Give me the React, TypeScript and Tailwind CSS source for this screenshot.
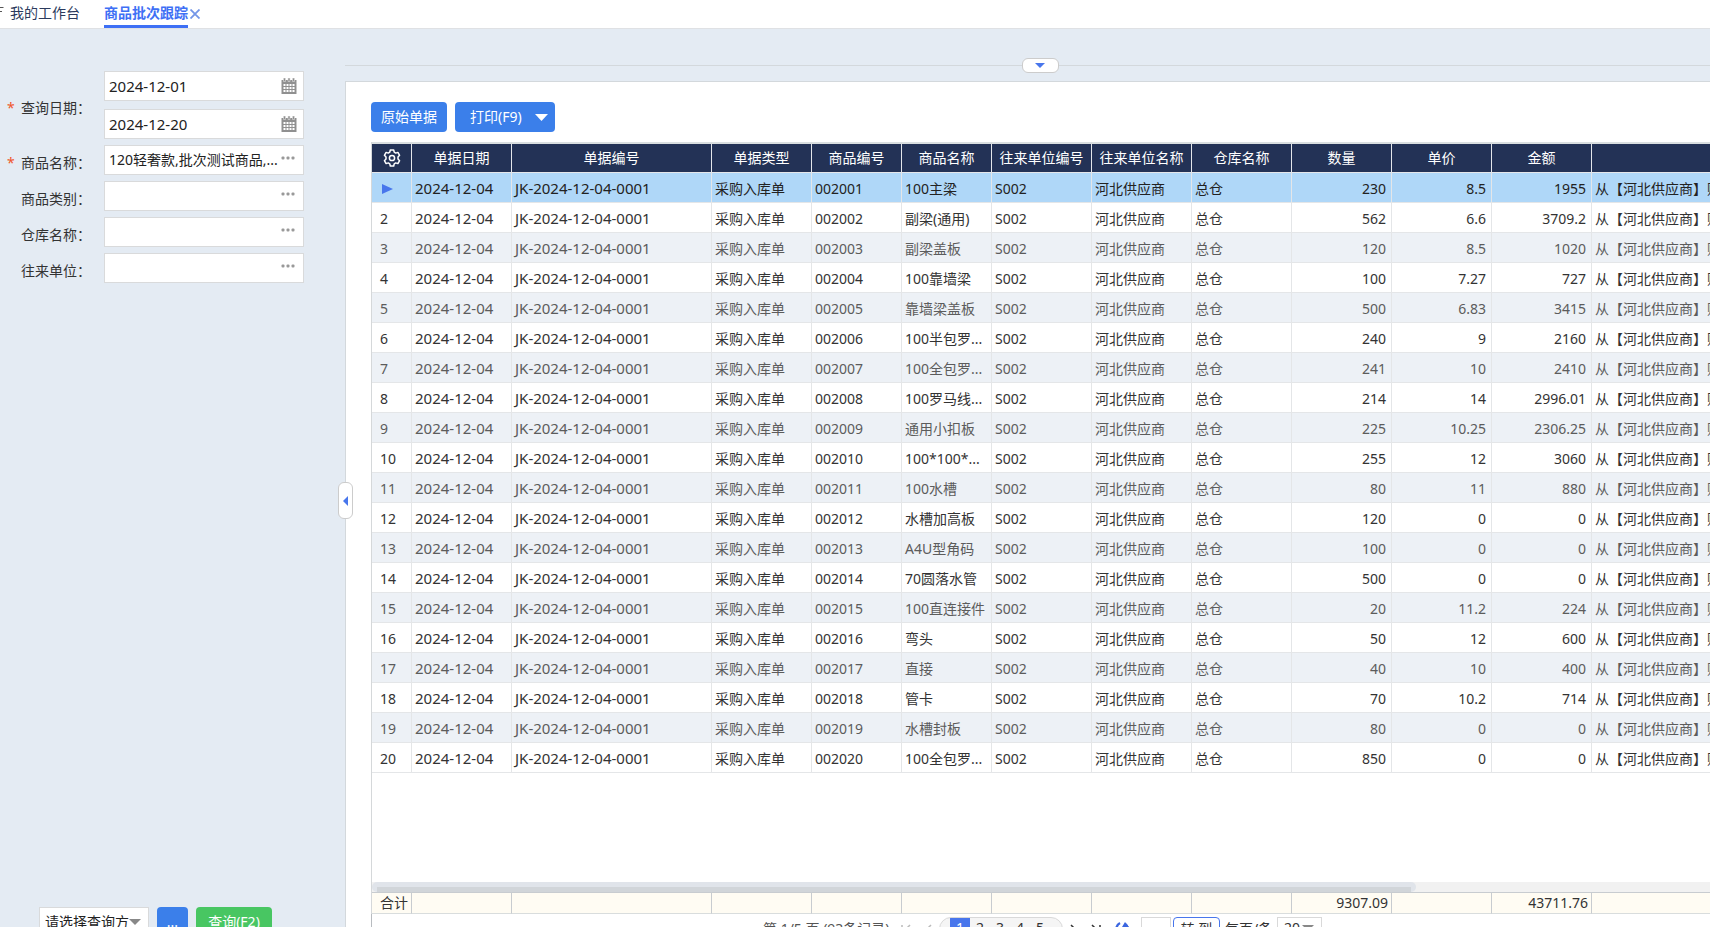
import type { ReactNode } from "react";

const columns = [
  { title: "单据日期", width: "w-[100px]" },
  { title: "单据编号", width: "w-[200px]" },
  { title: "单据类型", width: "w-[100px]" },
  { title: "商品编号", width: "w-[90px]" },
  { title: "商品名称", width: "w-[90px]" },
  { title: "往来单位编号", width: "w-[100px]" },
  { title: "往来单位名称", width: "w-[100px]" },
  { title: "仓库名称", width: "w-[100px]" },
  { title: "数量", width: "w-[100px]" },
  { title: "单价", width: "w-[100px]" },
  { title: "金额", width: "w-[100px]" },
  { title: "摘要", width: "w-[300px]" },
];

const items: [string, string, string, string][] = [
  ["100主梁", "230", "8.5", "1955"],
  ["副梁(通用)", "562", "6.6", "3709.2"],
  ["副梁盖板", "120", "8.5", "1020"],
  ["100靠墙梁", "100", "7.27", "727"],
  ["靠墙梁盖板", "500", "6.83", "3415"],
  ["100半包罗...", "240", "9", "2160"],
  ["100全包罗...", "241", "10", "2410"],
  ["100罗马线...", "214", "14", "2996.01"],
  ["通用小扣板", "225", "10.25", "2306.25"],
  ["100*100*...", "255", "12", "3060"],
  ["100水槽", "80", "11", "880"],
  ["水槽加高板", "120", "0", "0"],
  ["A4U型角码", "100", "0", "0"],
  ["70圆落水管", "500", "0", "0"],
  ["100直连接件", "20", "11.2", "224"],
  ["弯头", "50", "12", "600"],
  ["直接", "40", "10", "400"],
  ["管卡", "70", "10.2", "714"],
  ["水槽封板", "80", "0", "0"],
  ["100全包罗...", "850", "0", "0"],
];

function rowTone(index: number) {
  if (index === 0) return "bg-[#afd7f8] text-[#222222]";
  return index % 2 === 1 ? "bg-white text-[#333333]" : "bg-[#edf1f6] text-[#5c5c5c]";
}

function cellStyle(column: number) {
  if (column < 2) return "text-[15px] pl-[3px] pr-0";
  if (column >= 8 && column <= 10) return "pl-1 pr-[5px] text-right";
  return "pl-[3px] pr-0";
}

function ColumnWidths() {
  return (
    <colgroup>
      <col className="w-10" />
      {columns.map((c) => (
        <col key={c.title} className={c.width} />
      ))}
    </colgroup>
  );
}

function CalendarIcon() {
  return (
    <svg width="16" height="16" viewBox="0 0 16 16" aria-hidden="true">
      <path d="M0.5 2h15v14H0.5z" fill="#909090" />
      <path d="M2.5 0h2v3.5h-2zM7 0h2v3.5H7zM11.500 0h2v3.500h-2z" fill="#909090" stroke="#e0e0e0" strokeWidth="0.6" />
      <path
        d="M2.500 6h2v2h-2zM5.500 6h2v2h-2zM8.500 6h2v2h-2zM11.500 6h2v2h-2zM2.500 9h2v2h-2zM5.500 9h2v2h-2zM8.500 9h2v2h-2zM11.500 9h2v2h-2zM2.500 12h2v2h-2zM5.500 12h2v2h-2zM8.500 12h2v2h-2zM11.500 12h2v2h-2z"
        fill="#ffffff"
      />
    </svg>
  );
}

function DotsIcon() {
  return (
    <svg width="14" height="4" viewBox="0 0 14 4" aria-hidden="true" fill="#999999">
      <rect x="0.500" y="0.500" width="3" height="3" rx="1" />
      <rect x="5.500" y="0.500" width="3" height="3" rx="1" />
      <rect x="10.500" y="0.500" width="3" height="3" rx="1" />
    </svg>
  );
}

function GearIcon() {
  return (
    <svg width="18" height="18" viewBox="0 0 18 18" fill="none" stroke="#ffffff" strokeWidth="1.500" strokeLinejoin="round" aria-hidden="true">
      <path d="M7.300 1h3.400l.5 2.200 1.500.9 2.200-.7 1.700 2.900-1.600 1.700v2l1.600 1.700-1.700 2.900-2.200-.7-1.500.9-.5 2.200H7.300l-.5-2.200-1.500-.9-2.200.7-1.700-2.900L3 10V8L1.400 6.300l1.700-2.900 2.200.7 1.500-.9z" />
      <circle cx="9" cy="9" r="2.600" />
    </svg>
  );
}

function Field({ id, label, value = "", kind = "dots" }: { id: string; label: string; value?: string; kind?: "dots" | "date" }) {
  return (
    <div className="flex h-[30px] w-full min-w-0 items-center border border-[#d9dadb] bg-white pl-1 pr-1.5">
      <input
        id={id}
        aria-label={label}
        defaultValue={value}
        className={
          kind === "date"
            ? "w-0 min-w-0 flex-1 bg-transparent text-[15px] text-[#222222] outline-none"
            : "w-0 min-w-0 flex-1 bg-transparent text-sm text-[#222222] outline-none"
        }
      />
      <button type="button" aria-label={`选择${label}`} className={kind === "date" ? "shrink-0" : "shrink-0 pl-0.5 pr-0.5 pb-1"}>
        {kind === "date" ? <CalendarIcon /> : <DotsIcon />}
      </button>
    </div>
  );
}

function Label({ htmlFor, required, children }: { htmlFor: string; required?: boolean; children: ReactNode }) {
  return (
    <label htmlFor={htmlFor} className="flex w-[104px] shrink-0 items-center pt-1.5 text-sm text-[#333333]">
      <span className="w-[21px] shrink-0 pl-[7px] text-[#f0562a]">{required ? "*" : ""}</span>
      <span>{children}：</span>
    </label>
  );
}

function FilterPanel() {
  return (
    <aside className="flex w-[345px] shrink-0 flex-col justify-between">
      <form className="flex w-[304px] flex-col gap-1.5 pt-[42px]">
        <div className="flex items-center">
          <Label htmlFor="date-from" required>
            查询日期
          </Label>
          <div className="flex min-w-0 flex-1 flex-col gap-2">
            <Field id="date-from" label="开始日期" value="2024-12-01" kind="date" />
            <Field id="date-to" label="结束日期" value="2024-12-20" kind="date" />
          </div>
        </div>
        <div className="flex items-center">
          <Label htmlFor="goods" required>
            商品名称
          </Label>
          <Field id="goods" label="商品名称" value="120轻奢款,批次测试商品,..." />
        </div>
        <div className="flex items-center">
          <Label htmlFor="category">商品类别</Label>
          <Field id="category" label="商品类别" />
        </div>
        <div className="flex items-center">
          <Label htmlFor="warehouse">仓库名称</Label>
          <Field id="warehouse" label="仓库名称" />
        </div>
        <div className="flex items-center">
          <Label htmlFor="partner">往来单位</Label>
          <Field id="partner" label="往来单位" />
        </div>
      </form>
      <div className="flex h-12 gap-2 pl-[39px]">
        <div className="relative h-[30px] w-[110px]">
          <select aria-label="查询方案" className="h-full w-full appearance-none border border-[#d9dadb] bg-white pl-[5px] text-sm text-[#222222]">
            <option>请选择查询方</option>
          </select>
          <svg className="pointer-events-none absolute right-2 top-3" width="12" height="6" viewBox="0 0 12 6" aria-hidden="true">
            <path d="M0 0h12L6 6z" fill="#888888" />
          </svg>
        </div>
        <button type="button" className="h-[30px] w-[31px] rounded bg-[#3b7fea] text-sm text-white">
          ...
        </button>
        <button type="button" className="h-[30px] w-[76px] rounded bg-[#48c662] text-sm text-white">
          查询(F2)
        </button>
      </div>
    </aside>
  );
}

function DataGrid() {
  return (
    <div className="flex min-h-0 flex-1 flex-col overflow-hidden border-l border-[#d5d8da]">
      <div className="h-0.5 shrink-0 bg-[#d9dee0]" />
      <div className="min-h-0 flex-1 overflow-hidden">
        <table className="w-[1520px] table-fixed border-separate border-spacing-0 text-sm">
          <ColumnWidths />
          <thead>
            <tr className="h-[29px] bg-[#233256] text-white">
              <th className="border-b border-r border-[#e4e6ea] p-0">
                <button type="button" aria-label="列设置" className="flex w-full justify-center">
                  <GearIcon />
                </button>
              </th>
              {columns.map((c) => (
                <th key={c.title} className="whitespace-nowrap border-b border-r border-[#e4e6ea] p-0 text-center font-normal">
                  {c.title}
                </th>
              ))}
            </tr>
          </thead>
          <tbody>
            {items.map(([name, quantity, price, amount], i) => {
              const cells = [
                "2024-12-04",
                "JK-2024-12-04-0001",
                "采购入库单",
                `0020${String(i + 1).padStart(2, "0")}`,
                name,
                "S002",
                "河北供应商",
                "总仓",
                quantity,
                price,
                amount,
                "从【河北供应商】购入",
              ];
              return (
                <tr key={i} className={`h-[30px] ${rowTone(i)}`}>
                  <td className="border-b border-r border-[#e4e6e8] pb-0 pl-2 pr-0 pt-0.5">
                    {i === 0 ? (
                      <svg width="12" height="10" viewBox="0 0 12 10" className="ml-0.5" aria-label="当前行">
                        <path d="M0 0L11 5L0 10z" fill="#4876ec" />
                      </svg>
                    ) : (
                      i + 1
                    )}
                  </td>
                  {cells.map((cell, k) => (
                    <td
                      key={k}
                      className={`overflow-hidden whitespace-nowrap border-b border-r border-[#e4e6e8] pb-0 pt-0.5 ${cellStyle(k)}`}
                    >
                      {cell}
                    </td>
                  ))}
                </tr>
              );
            })}
          </tbody>
        </table>
      </div>
      <div className="h-2.5 shrink-0 bg-[#f1f1f1]">
        <div className="flex h-full w-[78%] items-end rounded-full bg-[#e0e4ea] px-[5px]">
          <div className="h-[5px] w-full bg-[#d1d5d9]" />
        </div>
      </div>
      <table className="w-[1520px] shrink-0 table-fixed border-separate border-spacing-0 text-sm">
        <ColumnWidths />
        <tbody>
          <tr className="h-[22px] bg-[#fffcf3] leading-5 text-[#333333]">
            <td className="whitespace-nowrap border-y border-r border-[#c8ccd0] border-b-[#d9dddd] py-0 pl-2 pr-0">合计</td>
            {columns.map((c) => (
              <td key={c.title} className="border-y border-r border-[#c8ccd0] border-b-[#d9dddd] py-0 pl-0 pr-[3px] text-right">
                {c.title === "数量" ? "9307.09" : c.title === "金额" ? "43711.76" : ""}
              </td>
            ))}
          </tr>
        </tbody>
      </table>
    </div>
  );
}

function Chevron({ d, color, label }: { d: string; color: string; label: string }) {
  return (
    <button type="button" aria-label={label} className="flex h-7 w-[22px] items-center justify-center">
      <svg width="12" height="14" viewBox="0 0 12 14" fill="none" stroke={color} strokeWidth="1.500" aria-hidden="true">
        <path d={d} />
      </svg>
    </button>
  );
}

function Pager() {
  return (
    <nav aria-label="分页" className="flex h-[41px] shrink-0 items-start border-l border-[#b8bcc0] pl-[391px] pt-[3px] text-sm text-[#333333]">
      <span className="w-[132px] whitespace-nowrap leading-6 text-[#555555]">第 1/5 页 (93条记录)</span>
      <Chevron label="首页" color="#bbbbbb" d="M2 1v12M10 1L4 7l6 6" />
      <Chevron label="上一页" color="#bbbbbb" d="M9 1L3 7l6 6" />
      <div className="flex h-7 w-[124px] overflow-hidden rounded-xl border border-[#d9d9d9] bg-[#f5f5f5] pl-2.5">
        {[1, 2, 3, 4, 5].map((page) => (
          <button key={page} type="button" className={page === 1 ? "w-5 bg-[#4876ec] pb-1.5 text-white" : "w-5 pb-1.5"}>
            {page}
          </button>
        ))}
      </div>
      <Chevron label="下一页" color="#333333" d="M3 1l6 6l-6 6" />
      <Chevron label="末页" color="#333333" d="M2 1l6 6l-6 6M10 1v12" />
      <button type="button" aria-label="刷新" className="ml-1 flex h-7 w-[22px] items-center justify-center pb-1">
        <svg width="16" height="16" viewBox="0 0 16 16" fill="none" stroke="#3b66e0" strokeWidth="2.500" aria-hidden="true">
          <path d="M6 2A6.500 6.500 0 0 0 5 13M10 14A6.500 6.500 0 0 0 11 3" />
          <path d="M8 6l3-5l4 5" fill="#3b66e0" stroke="none" />
        </svg>
      </button>
      <input aria-label="页码" className="ml-2 h-7 w-[30px] border border-[#d9d9d9] bg-white" />
      <button type="button" className="ml-0.5 h-7 w-[47px] whitespace-pre rounded border border-[#4876ec] bg-white pb-1">
        转 到
      </button>
      <label htmlFor="page-size" className="ml-[5px] w-[52px] whitespace-nowrap leading-6">
        每页/条
      </label>
      <div className="relative h-7 w-[45px]">
        <select id="page-size" className="h-full w-full appearance-none border border-[#d9d9d9] bg-white pb-1.5 pl-1.5 text-sm">
          <option>20</option>
        </select>
        <svg className="pointer-events-none absolute right-2 top-2" width="12" height="6" viewBox="0 0 12 6" aria-hidden="true">
          <path d="M0 0h12L6 6z" fill="#888888" />
        </svg>
      </div>
    </nav>
  );
}

export default function App() {
  return (
    <div className="h-screen overflow-hidden bg-[#e4ebf3] font-['Noto_Sans','Noto_Sans_CJK_SC',sans-serif]">
      <div className="flex h-[calc(100vh+28px)] flex-col">
        <header className="flex h-[29px] shrink-0 items-start border-b border-[#dfe1e4] bg-white text-sm leading-[25px]">
          <svg width="4" height="16" viewBox="0 0 4 16" className="mt-1" aria-hidden="true">
            <path d="M0 3.500h3.500M0 7.500h2" stroke="#555555" fill="none" />
          </svg>
          <a href="#desk" className="ml-1.5 w-[94px] text-[#2b3a5c]">
            我的工作台
          </a>
          <a href="#batch" className="h-7 border-b-[3px] border-[#3e70f5] font-bold text-[#3e70f5]">
            商品批次跟踪
          </a>
          <button type="button" aria-label="关闭标签" className="ml-0.5 flex h-7 items-center">
            <svg width="10" height="10" viewBox="0 0 10 10" stroke="#7396e8" strokeWidth="1.800" aria-hidden="true">
              <path d="M0.500 0.500l9 9M9.500 0.500l-9 9" />
            </svg>
          </button>
        </header>
        <div className="flex min-h-0 flex-1">
          <FilterPanel />
          <div className="flex min-w-0 flex-1 flex-col pt-9">
            <div className="relative h-4 shrink-0 border-t border-[#d3d8dc]">
              <button
                type="button"
                aria-label="展开查询条件"
                className="absolute left-1/2 top-[-8px] flex h-[15px] w-[37px] -translate-x-1.5 items-center justify-center rounded-md border border-[#cccccc] bg-white"
              >
                <svg width="10" height="5" viewBox="0 0 10 5" aria-hidden="true">
                  <path d="M0 0h10L5 5z" fill="#4876ec" />
                </svg>
              </button>
            </div>
            <main className="relative flex min-h-0 flex-1 flex-col border-l border-t border-[#d3d8dc] bg-white pl-[25px] pt-5">
              <button
                type="button"
                aria-label="收起查询条件"
                className="absolute left-[-8px] top-[400px] flex h-[37px] w-[15px] items-center justify-center rounded-md border border-[#cccccc] bg-white"
              >
                <svg width="5" height="10" viewBox="0 0 5 10" aria-hidden="true">
                  <path d="M5 0v10L0 5z" fill="#4876ec" />
                </svg>
              </button>
              <div className="mb-2.5 flex gap-2 text-sm text-white">
                <button type="button" className="h-[30px] w-[76px] rounded bg-[#3b7fea]">
                  原始单据
                </button>
                <button type="button" className="flex h-[30px] w-[100px] items-center justify-between rounded bg-[#3b7fea] pl-[15px] pr-[7px]">
                  打印(F9)
                  <svg width="13" height="7" viewBox="0 0 13 7" aria-hidden="true">
                    <path d="M0 0h13L6.500 7z" fill="#ffffff" />
                  </svg>
                </button>
              </div>
              <DataGrid />
              <Pager />
            </main>
          </div>
        </div>
      </div>
    </div>
  );
}
